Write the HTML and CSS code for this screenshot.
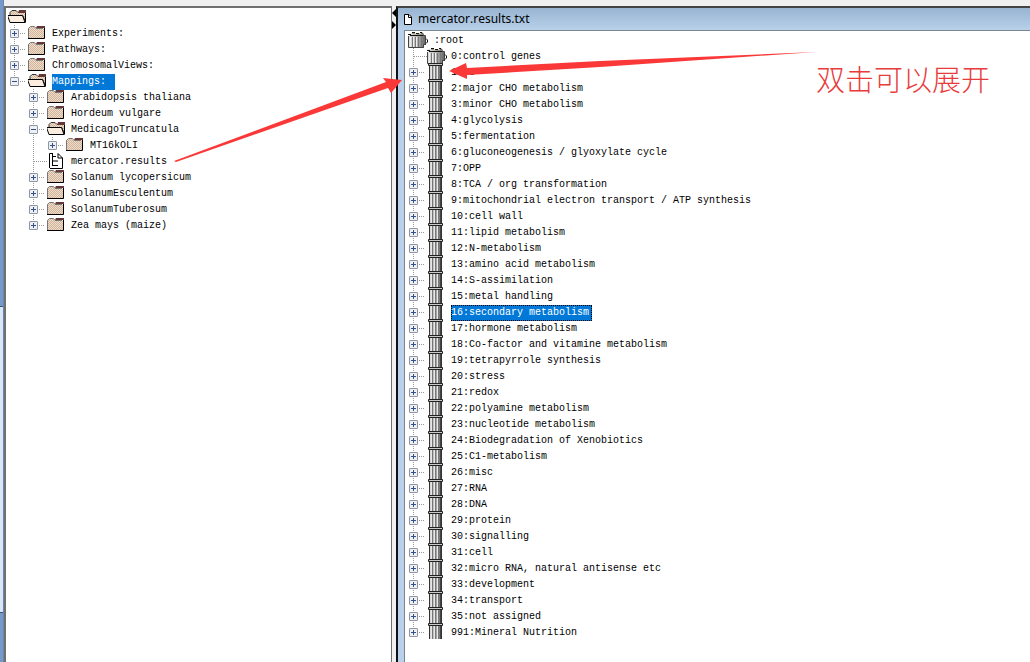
FILE: index.html
```html
<!DOCTYPE html>
<html lang="en">
<head>
<meta charset="utf-8">
<title>mercator.results.txt</title>
<link rel="stylesheet" href="styles.css">
</head>
<body>
<svg class="defs" width="0" height="0" aria-hidden="true">
  <defs>
    <pattern id="tan" width="2" height="2" patternUnits="userSpaceOnUse">
      <rect width="2" height="2" fill="#f3dcc6"/><rect width="1" height="1" fill="#cdb5a0"/><rect x="1" y="1" width="1" height="1" fill="#cdb5a0"/>
    </pattern>
    <linearGradient id="stone"><stop offset="0" stop-color="#e0e0e0"/><stop offset=".5" stop-color="#b4b4b4"/><stop offset="1" stop-color="#5c5c5c"/></linearGradient>
    <symbol id="folder" viewBox="1 0 20 16">
      <path d="M1 13.500V3.500L3 1.500H7L9 3.500H17V13.500Z" fill="url(#tan)"/>
      <path d="M1.500 13V3.500L3.500 1.500H7.500L9 3.500H16" fill="none" stroke="#777"/>
      <path d="M10 1H18V3H9Z" fill="#653838"/>
      <path d="M1 13.500H17.500V3" fill="none" stroke="#000"/>
    </symbol>
    <symbol id="open" viewBox="1 0 20 16">
      <path d="M3 6V3.500L5 1.500H9L11 3.500H18.500V13L16 7H3Z" fill="url(#tan)" stroke="#333"/>
      <path d="M12 1H19V4H11Z" fill="#653838"/>
      <path d="M.5 6.500H15.500L18 13.500H3Z" fill="#fbeee0" stroke="#000"/>
      <path d="M18.500 4V13.500" stroke="#000"/>
    </symbol>
    <symbol id="doc" viewBox="1 0 20 16">
      <path d="M3.500.5H12L16.500 5V15.500H3.500Z" fill="#fff"/>
      <path d="M3.500 15V.5H7M16.500 5V15.500H4M12 .5 16.500 5H12Z" fill="none" stroke="#000"/>
      <path d="M6.500 1V13M6.500 3.500H10M6.500 8H12M6.500 12.500H12" fill="none" stroke="#000"/>
    </symbol>
    <symbol id="capital" viewBox="0 0 20 16">
      <path d="M1 1.500H16V4H18V13H16V16H1Z" fill="url(#stone)"/>
      <path d="M.5 4V15.500H15.500V12.500H17.500V3.500H15" fill="none" stroke="#444"/>
      <path d="M0 2.500H3M4 .5H7M8 1.500H11M12 .5H14V2M2 3.500H15" stroke="#111" fill="none"/>
      <path d="M4 1.500H7M9 2.500H12" stroke="#a89b75"/>
      <path d="M4.500 5V15M7.500 5V15M10.500 5V15M13.500 5V15" stroke="#777"/>
      <path d="M5.500 5V15M2.500 5V15M8.500 5V15" stroke="#eee"/>
      <path d="M18 6.500 19.500 8V10L18 11.500" fill="#fff" stroke="#111"/>
    </symbol>
    <symbol id="shaft" viewBox="0 0 20 16" overflow="visible">
      <path d="M2 0H15V15H2Z" fill="url(#stone)"/>
      <path d="M2.500 0V15M14.500 0V15" stroke="#333"/>
      <path d="M5.500 2V15M8.500 2V15M11.500 2V15" stroke="#777"/>
      <path d="M4.500 2V15M7.500 2V15M10.500 2V15" stroke="#e6e6e6"/>
      <path d="M13.500 2V15" stroke="#444"/>
      <path d="M1.500-.5H15.500V1.500H1.500Z" fill="#c8c8c8" stroke="#222"/>
    </symbol>
  </defs>
</svg>

<div class="app">
  <div class="edge"><div class="edge-thumb"></div></div>

  <nav class="panel" aria-label="Project tree">
    <div class="row"><svg class="icon"><use href="#open"/></svg></div>
    <ul class="tree" id="project"></ul>
  </nav>

  <div class="splitter">
    <button class="collapse left" aria-label="Collapse left"></button>
    <button class="collapse right" aria-label="Collapse right"></button>
  </div>

  <main class="window">
    <header class="titlebar">
      <svg class="title-icon" viewBox="0 0 8 11"><path d="M.5.500H5L7.500 3V10.500H.5Z" fill="#fff" stroke="#000"/><path d="M4.500.5V3.500H7.500" fill="none" stroke="#000"/></svg>
      <h1 class="title">mercator.results.txt</h1>
    </header>
    <div class="client">
      <div class="row root"><svg class="icon"><use href="#capital"/></svg><span class="label">:root</span></div>
      <ul class="tree" id="bins"></ul>
    </div>
  </main>
</div>

<svg class="arrows" viewBox="0 0 1030 662" aria-hidden="true">
  <path d="M174 161 386 82 383 78 402 80 391 93 388 88 176 162Z"/>
  <path d="M449 71 466 63 467 68 600 61 816 52 600 67 467 75 467 79Z"/>
</svg>
<p class="note" lang="zh-CN">双击可以展开</p>
<script src="tree.js"></script>
</body>
</html>
```
FILE: styles.css
```css
* { box-sizing: border-box; }

body {
  margin: 0;
  position: relative;
  background: #f0f0f0;
  color: #000;
  font-family: "Liberation Mono", monospace;
  font-size: 10px;
  line-height: 16px;
}

.defs { position: absolute; }

.app {
  display: flex;
  min-height: 100vh;
  overflow: hidden;
}

.edge {
  flex: none;
  width: 4px;
  background: #7799c8;
  border-right: 1px solid #6685b0;
  padding-top: 306px;
}

.edge-thumb {
  height: 307px;
  background: #d9e6f5;
  border-top: 1px solid #3c5274;
  border-bottom: 1px solid #3c5274;
}

.panel {
  flex: 0 0 388px;
  margin-top: 6px;
  padding: 1px 0 0 4px;
  background: #fff;
  border: 2px solid #707070;
  border-bottom: 0;
  border-right-width: 1px;
}

.panel > .row { margin-left: -2px; }

.splitter {
  flex: 0 0 4px;
  padding-top: 9px;
  display: flex;
  flex-direction: column;
  gap: 4px;
}

.collapse {
  width: 4px;
  height: 8px;
  padding: 0;
  border: 0;
  background: #000;
}

.collapse.left { clip-path: polygon(100% 0, 0 50%, 100% 100%); }
.collapse.right { clip-path: polygon(0 0, 100% 50%, 0 100%); }

.window {
  flex: 1;
  display: flex;
  flex-direction: column;
  margin-top: 6px;
  background: #b9d1ea;
  border-left: 2px solid #111;
  border-top: 2px solid #444;
}

.titlebar {
  display: flex;
  align-items: center;
  gap: 6px;
  height: 22px;
  padding-left: 6px;
  background: linear-gradient(#98b4d1, #b9d1ea);
}

.title-icon {
  width: 8px;
  height: 11px;
}

.title {
  margin: 0;
  font: 400 12px/16px "Noto Sans", sans-serif;
  font-kerning: none;
}

.client {
  flex: 1;
  margin-left: 6px;
  padding: 1px 0 0 4px;
  background: #fff;
  border-left: 1px solid #7b8590;
  border-top: 1px solid #7b8590;
}

.tree {
  margin: 0;
  padding: 0;
  list-style: none;
}

.tree .tree { padding-left: 19px; }

.tree li {
  background: repeating-linear-gradient(#999 0 1px, transparent 1px 2px) 4px 0 / 1px 100% no-repeat;
}

.tree li:last-child { background-size: 1px 8px; }

.row {
  display: flex;
  align-items: center;
  height: 16px;
}

.toggle {
  flex: none;
  width: 9px;
  height: 9px;
  padding: 0;
  border: 1px solid #8c96a5;
  border-radius: 1px;
  background:
    linear-gradient(#34508c, #34508c) center / 5px 1px no-repeat,
    linear-gradient(#34508c, #34508c) center / 1px 5px no-repeat,
    #eef0f3;
}

.toggle.open {
  background:
    linear-gradient(#34508c, #34508c) center / 5px 1px no-repeat,
    #eef0f3;
}

.stub {
  flex: none;
  width: 9px;
  height: 1px;
  background: repeating-linear-gradient(90deg, transparent 0 1px, #999 1px 2px);
  background-size: 7px 1px;
  background-repeat: no-repeat;
}

.stub.leaf {
  width: 18px;
  padding-left: 4px;
  background-size: auto;
  background-clip: content-box;
}

.icon {
  flex: none;
  width: 20px;
  height: 16px;
  overflow: visible;
}

.label {
  margin: 2px 0 0 4px;
  padding-right: 3px;
  white-space: pre;
}

.root .label { margin-left: 6px; }
.root { margin-left: -1px; }

.selected {
  background: #0078d7;
  color: #fff;
}

.focused {
  outline: 1px dotted #000;
  outline-offset: -1px;
}

.arrows {
  position: absolute;
  top: 0;
  left: 0;
  width: 1030px;
  height: 662px;
  fill: #fb3838;
  pointer-events: none;
}

.note {
  position: absolute;
  top: 60px;
  left: 816px;
  margin: 0;
  color: #e83c3c;
  font: 300 29px/36px "Noto Sans CJK SC", sans-serif;
  white-space: nowrap;
}
```
FILE: tree.js
```js
const project = [
  { name: "Experiments:", icon: "folder" },
  { name: "Pathways:", icon: "folder" },
  { name: "ChromosomalViews:", icon: "folder" },
  { name: "Mappings: ", icon: "open", selected: true, children: [
    { name: "Arabidopsis thaliana", icon: "folder" },
    { name: "Hordeum vulgare", icon: "folder" },
    { name: "MedicagoTruncatula", icon: "open", children: [
      { name: "MT16kOLI", icon: "folder" }
    ] },
    { name: "mercator.results", icon: "doc", leaf: true },
    { name: "Solanum lycopersicum", icon: "folder" },
    { name: "SolanumEsculentum", icon: "folder" },
    { name: "SolanumTuberosum", icon: "folder" },
    { name: "Zea mays (maize)", icon: "folder" }
  ] }
];

const bins = [
  "0:control genes", "1:PS", "2:major CHO metabolism", "3:minor CHO metabolism",
  "4:glycolysis", "5:fermentation", "6:gluconeogenesis / glyoxylate cycle", "7:OPP",
  "8:TCA / org transformation", "9:mitochondrial electron transport / ATP synthesis",
  "10:cell wall", "11:lipid metabolism", "12:N-metabolism", "13:amino acid metabolism",
  "14:S-assimilation", "15:metal handling", "16:secondary metabolism",
  "17:hormone metabolism", "18:Co-factor and vitamine metabolism",
  "19:tetrapyrrole synthesis", "20:stress", "21:redox", "22:polyamine metabolism",
  "23:nucleotide metabolism", "24:Biodegradation of Xenobiotics", "25:C1-metabolism",
  "26:misc", "27:RNA", "28:DNA", "29:protein", "30:signalling", "31:cell",
  "32:micro RNA, natural antisense etc", "33:development", "34:transport",
  "35:not assigned", "991:Mineral Nutrition"
].map((name, i) => ({
  name,
  icon: i === 0 ? "capital" : "shaft",
  leaf: i === 0,
  selected: name.startsWith("16:"),
  focused: name.startsWith("16:")
}));

function render(nodes) {
  return nodes.map(n => {
    const toggle = n.leaf
      ? '<span class="stub leaf"></span>'
      : `<button class="toggle${n.children ? " open" : ""}" aria-label="Toggle ${n.name}"></button><span class="stub"></span>`;
    const state = (n.selected ? " selected" : "") + (n.focused ? " focused" : "");
    const sub = n.children ? `<ul class="tree">${render(n.children)}</ul>` : "";
    return `<li><div class="row">${toggle}<svg class="icon"><use href="#${n.icon}"/></svg><span class="label${state}">${n.name}</span></div>${sub}</li>`;
  }).join("");
}

document.getElementById("project").innerHTML = render(project);
document.getElementById("bins").innerHTML = render(bins);
```
